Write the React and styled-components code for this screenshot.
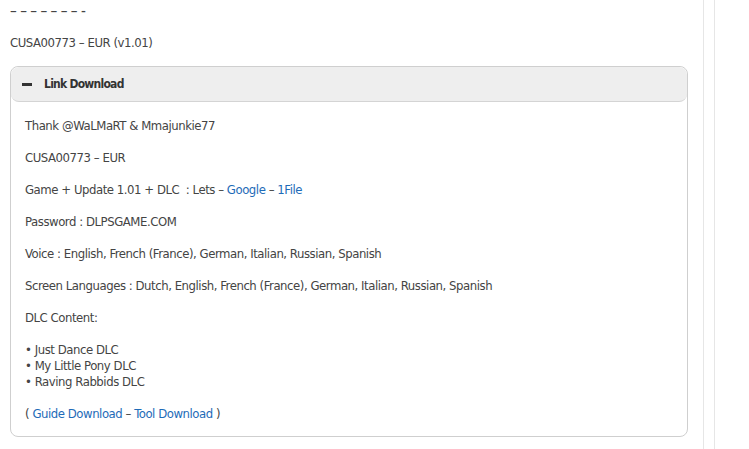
import React from "react";
import styled, { createGlobalStyle } from "styled-components";

const Global = createGlobalStyle`
  html, body { margin: 0; padding: 0; background: #fff; }
  body { font-family: "DejaVu Sans Condensed", "Liberation Sans", sans-serif; font-size: 13px; letter-spacing: -0.45px; color: #444; }
`;

const Page = styled.div`
  display: flex;
  width: 749px;
  height: 449px;
  overflow: hidden;
`;

const Main = styled.div`
  width: 678px;
  padding: 0 0 0 10px;
  display: flex;
  flex-direction: column;
`;

const Rail = styled.div`
  margin-left: 15px;
  width: 10px;
  border-left: 1px solid #e6e6e6;
  border-right: 1px solid #e6e6e6;
`;

const Dashes = styled.div`
  margin-top: 3px;
  line-height: 16px;
  font-size: 15px;
  color: #444;
  letter-spacing: 3.4px;
`;

const Para = styled.p`
  margin: 0;
  line-height: 16px;
  margin-top: ${(p) => p.$top || 0}px;
`;

const Box = styled.div`
  margin-top: 15px;
  border: 1px solid #cfcfcf;
  border-radius: 8px;
  overflow: hidden;
`;

const Header = styled.div`
  display: flex;
  align-items: center;
  gap: 12px;
  height: 34px;
  padding-left: 11px;
  background: #eeeeee;
  border-bottom: 1px solid #d4d4d4;
  border-radius: 8px;
  font-size: 12px;
  font-weight: bold;
  letter-spacing: -0.75px;
  color: #333;
`;

const Minus = styled.span`
  display: inline-block;
  width: 10px;
  height: 3px;
  background: #333;
`;

const Body = styled.div`
  padding: 16px 14px 14px 14px;
`;

const Line = styled.p`
  margin: 0 0 16px;
  line-height: 16px;
  &:last-child { margin-bottom: 0; }
`;

const A = styled.a`
  color: #1e6bb8;
  text-decoration: none;
`;

export default function App() {
  return (
    <>
      <Global />
      <Page>
        <Main>
          <Dashes>–––––––-</Dashes>
          <Para $top={16}>CUSA00773 – EUR (v1.01)</Para>
          <Box>
            <Header>
              <Minus />
              <span>Link Download</span>
            </Header>
            <Body>
              <Line>Thank @WaLMaRT &amp; Mmajunkie77</Line>
              <Line>CUSA00773 – EUR</Line>
              <Line>
                Game + Update 1.01 + DLC&nbsp; : Lets – <A href="#">Google</A> – <A href="#">1File</A>
              </Line>
              <Line>Password : DLPSGAME.COM</Line>
              <Line>Voice : English, French (France), German, Italian, Russian, Spanish</Line>
              <Line>Screen Languages : Dutch, English, French (France), German, Italian, Russian, Spanish</Line>
              <Line>DLC Content:</Line>
              <Line>
                • Just Dance DLC
                <br />• My Little Pony DLC
                <br />• Raving Rabbids DLC
              </Line>
              <Line>
                ( <A href="#">Guide Download</A> – <A href="#">Tool Download</A> )
              </Line>
            </Body>
          </Box>
        </Main>
        <Rail />
      </Page>
    </>
  );
}
